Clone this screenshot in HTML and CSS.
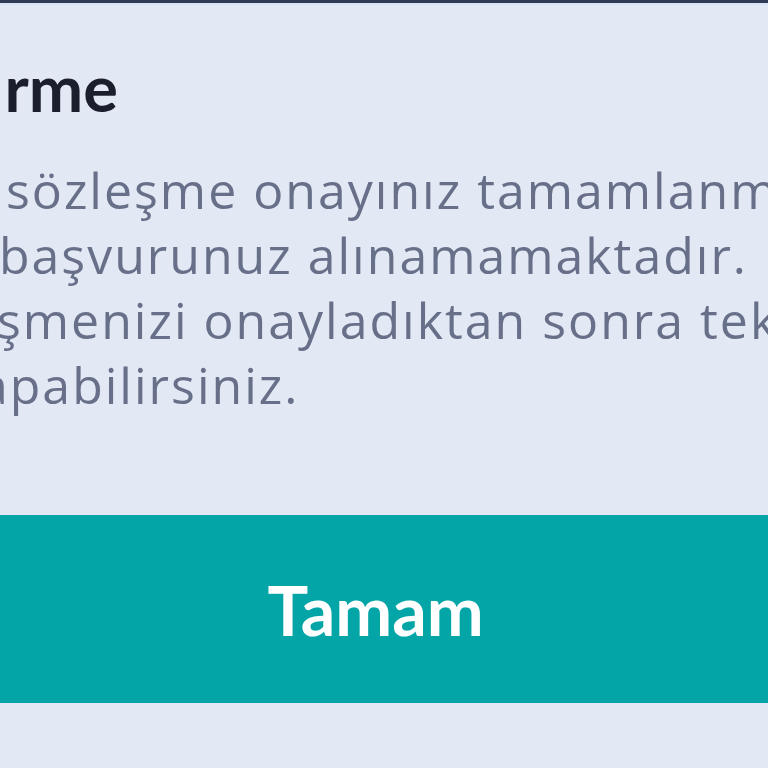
FILE: index.html
```html
<!DOCTYPE html>
<html lang="tr">
<head>
<meta charset="utf-8">
<link rel="stylesheet" href="styles.css">
</head>
<body>
<div class="topbar"></div>
<div class="dialog">
  <h1 class="title"><span class="cut-i">i</span>rme</h1>
  <div class="message">
    <div class="line l1">sözleşme onayınız tamamlanmadığı</div>
    <div class="line l2">başvurunuz alınamamaktadır.</div>
    <div class="line l3">şmenizi onayladıktan sonra tekrar</div>
    <div class="line l4">apabilirsiniz.</div>
  </div>
  <button class="ok">Tamam</button>
</div>
</body>
</html>
```
FILE: styles.css
```css
html, body {
  margin: 0;
  padding: 0;
  width: 768px;
  height: 768px;
  overflow: hidden;
  background: #e2e8f4;
  font-family: "Lato", "Noto Sans", sans-serif;
}
.topbar {
  height: 3px;
  background: #2f3a55;
  border-bottom: 2px solid #d6e4f4;
}
.dialog {
  display: flex;
  flex-direction: column;
  overflow: hidden;
}
.title {
  margin: 0;
  padding-top: 50px;
  font-size: 65px;
  line-height: 65px;
  font-weight: 700;
  color: #1b1e2c;
  white-space: nowrap;
}
.cut-i {
  margin-left: -16px;
  margin-right: 4px;
}
.message {
  margin-top: 38px;
  color: #687089;
  font-family: "Open Sans", "Noto Sans", sans-serif;
  font-size: 50px;
  letter-spacing: 2px;
  line-height: 65px;
  white-space: nowrap;
}
.l1 { margin-left: 6px; }
.l2 { margin-left: -1px; }
.l3 { margin-left: -3px; }
.l4 { margin-left: -20px; }
.ok {
  margin-top: 97px;
  height: 188px;
  width: 100%;
  border: 0;
  background: #03a5a6;
  color: #ffffff;
  font-family: "Lato", "Noto Sans", sans-serif;
  font-size: 68px;
  font-weight: 700;
  padding: 0 17px 0 0;
}
```
